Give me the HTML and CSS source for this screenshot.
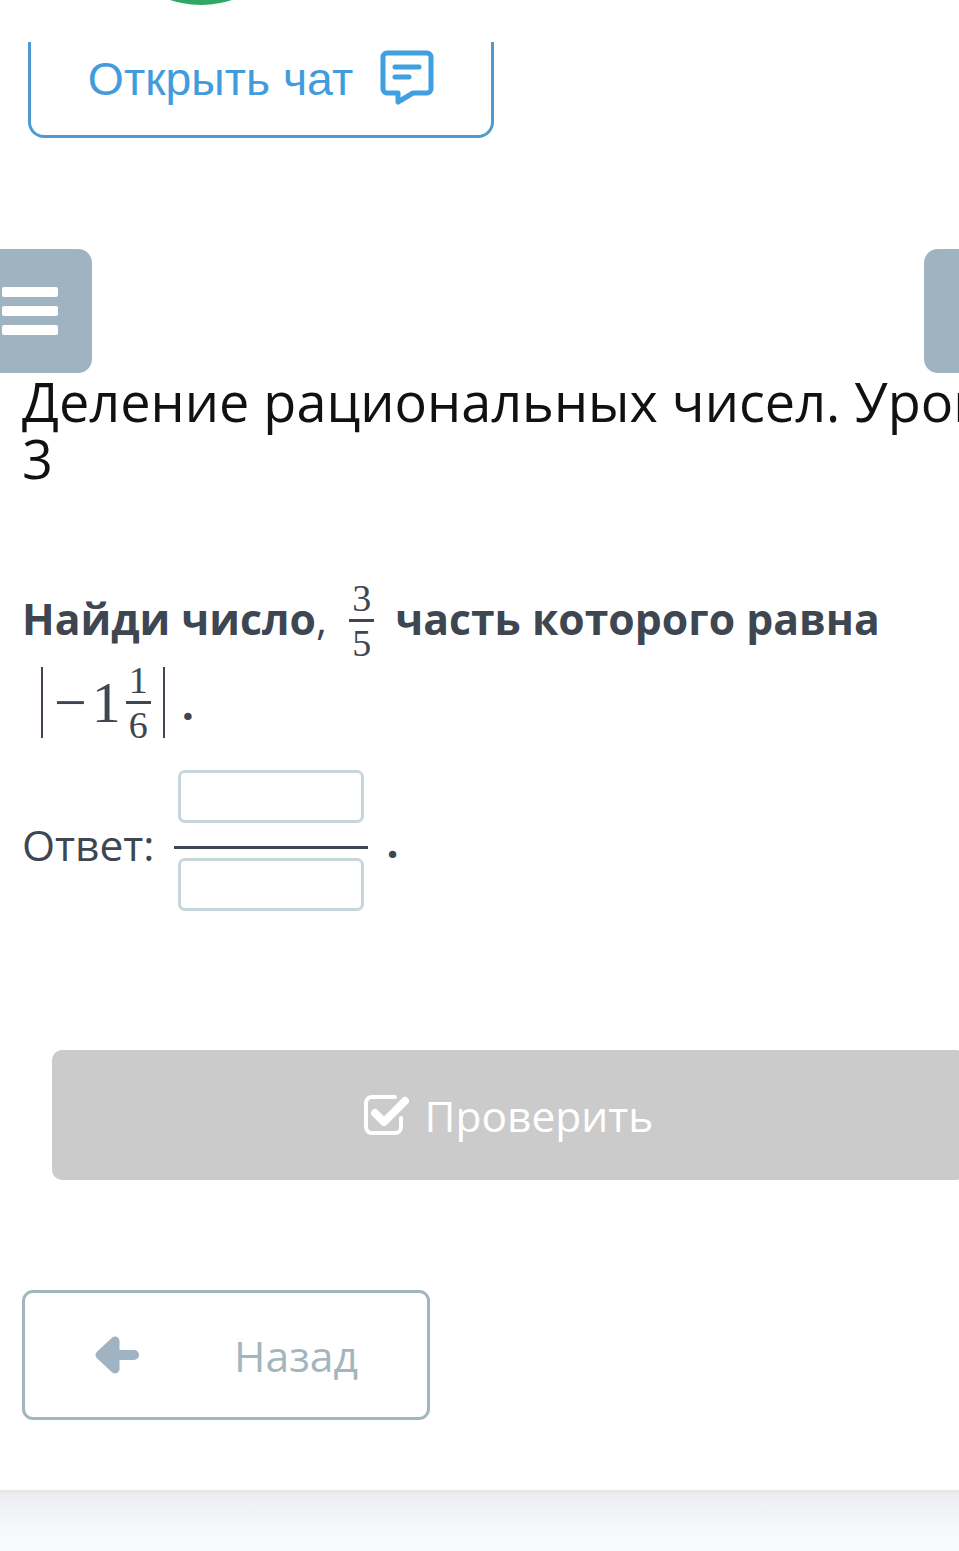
FILE: index.html
```html
<!DOCTYPE html>
<html lang="ru">
<head>
    <meta charset="UTF-8">
    <meta name="viewport" content="width=device-width, initial-scale=1.0">
    <title>Деление рациональных чисел</title>
    <link rel="stylesheet" href="styles.css">
</head>
<body>
    <div class="page">

        <!-- Chat block -->
        <div class="top-strip"><div class="avatar"></div></div>
        <button class="chat-button">
            <span>Открыть чат</span>
            <svg class="chat-icon" viewBox="0 0 54 55">
                <path d="M7 3H47A4 4 0 0 1 51 7V39A4 4 0 0 1 47 43H33L18 52V43H7A4 4 0 0 1 3 39V7A4 4 0 0 1 7 3Z" fill="#fff" stroke="#3f9fe0" stroke-width="5" stroke-linejoin="round"/>
                <path d="M15 17H39M15 27H29" fill="none" stroke="#3f9fe0" stroke-width="5" stroke-linecap="round"/>
            </svg>
        </button>

        <!-- Side menu buttons -->
        <div class="side-row">
            <div class="side-button side-left">
                <span class="bar"></span>
                <span class="bar"></span>
                <span class="bar"></span>
            </div>
            <div class="side-button side-right"></div>
        </div>

        <h1 class="lesson-title">Деление рациональных чисел. Уровень 3</h1>

        <!-- Task -->
        <div class="question">
            <b>Найди число</b>,
            <span class="frac frac-first"><span class="num">3</span><span class="den">5</span></span>
            <b>часть которого равна</b>
        </div>
        <div class="math-line">
            <span class="abs">
                <span class="minus">−</span><span class="whole">1</span>
                <span class="frac frac-small"><span class="num">1</span><span class="den">6</span></span>
            </span>
            <span class="dot">.</span>
        </div>

        <div class="answer">
            <span class="answer-label">Ответ:</span>
            <div class="answer-frac">
                <input type="text" class="answer-input">
                <div class="answer-line"></div>
                <input type="text" class="answer-input">
            </div>
            <span class="answer-dot">.</span>
        </div>

        <button class="check-button">
            <svg class="check-icon" viewBox="0 0 46 42">
                <path d="M38 24V33A6 6 0 0 1 32 39H9A6 6 0 0 1 3 33V9A6 6 0 0 1 9 3H32" fill="none" stroke="#fff" stroke-width="4" stroke-linecap="round"/>
                <path d="M12 19L21 28L42 7" fill="none" stroke="#fff" stroke-width="8" stroke-linecap="round" stroke-linejoin="round"/>
            </svg>
            <span>Проверить</span>
        </button>

        <button class="back-button">
            <svg class="back-icon" viewBox="0 0 44 38">
                <path d="M20 5L5 19L20 33Z" fill="#9fb3c2" stroke="#9fb3c2" stroke-width="9" stroke-linejoin="round"/>
                <path d="M10 19H39" fill="none" stroke="#9fb3c2" stroke-width="10" stroke-linecap="round"/>
            </svg>
            <span>Назад</span>
        </button>

    </div>
    <div class="footer"></div>
</body>
</html>
```

FILE: styles.css
```css
html, body {
    margin: 0;
    height: 1551px;
    overflow: hidden;
    background: #fff;
}
body {
    font-family: "Open Sans", sans-serif;
    color: #3d4651;
}
.page {
    width: 1018px;
    height: 1490px;
}
.top-strip {
    height: 42px;
    overflow: hidden;
}
.avatar {
    width: 196px;
    height: 196px;
    margin: -191px 0 0 103px;
    border-radius: 50%;
    background: #2fa866;
}
.chat-button {
    display: flex;
    align-items: center;
    justify-content: center;
    gap: 27px;
    width: 466px;
    height: 96px;
    margin-left: 28px;
    padding: 0 0 20px;
    box-sizing: border-box;
    background: #fff;
    border: 3px solid #4f9bd0;
    border-top: none;
    border-radius: 0 0 16px 16px;
    font-family: "Liberation Sans", Arial, sans-serif;
    font-size: 46.4px;
    color: #429cdc;
}
.chat-icon {
    width: 54px;
    height: 55px;
    margin-top: -2px;
}
.side-row {
    display: flex;
    justify-content: space-between;
    height: 124px;
    margin-top: 111px;
}
.side-button {
    width: 94px;
    background: #9fb3c0;
    border-radius: 14px;
}
.side-left {
    display: flex;
    flex-direction: column;
    justify-content: center;
    gap: 9.5px;
    margin-left: -2px;
    padding-left: 4px;
    box-sizing: border-box;
    border-radius: 0 14px 14px 0;
}
.bar {
    width: 56px;
    height: 9.5px;
    background: #fff;
    border-radius: 2px;
}
.lesson-title {
    width: 1075px;
    margin: 0;
    padding-left: 22px;
    font-size: 54px;
    font-weight: 400;
    line-height: 57px;
    color: #111;
}
.question {
    margin: 92px 0 0 22px;
    width: 930px;
    font-size: 42.7px;
    line-height: 76px;
}
.question b {
    font-weight: 700;
}
.frac {
    display: inline-flex;
    flex-direction: column;
    align-items: center;
    vertical-align: middle;
    font-family: "Liberation Serif", serif;
    font-weight: 400;
    line-height: 1;
}
.frac .num {
    padding: 0 3px 2px;
    border-bottom: 3px solid #3d4651;
}
.frac .den {
    padding-top: 2px;
}
.frac-first {
    margin: 0 10px 6px 11px;
    font-size: 38px;
}
.math-line {
    display: flex;
    align-items: center;
    height: 76px;
    margin: -4px 0 0 41px;
}
.abs {
    display: flex;
    align-items: center;
    height: 71px;
    padding-left: 11px;
    border-left: 2px solid #3d4651;
    border-right: 2px solid #3d4651;
    font-family: "Liberation Serif", serif;
    font-size: 58px;
}
.minus {
    margin-right: 5px;
}
.frac-small {
    margin: 0 12px 0 5px;
    font-size: 38px;
}
.dot {
    margin: 0 0 -2px 17px;
    font-size: 43px;
    font-weight: 700;
    line-height: 1;
}
.answer {
    display: flex;
    align-items: center;
    margin: 30px 0 0 22px;
    font-size: 42.5px;
}
.answer-label {
    margin-right: 19px;
    padding-top: 8px;
}
.answer-frac {
    display: flex;
    flex-direction: column;
    align-items: center;
    width: 194px;
}
.answer-input {
    width: 186px;
    height: 53px;
    padding: 0;
    box-sizing: border-box;
    border: 3px solid #c6d6da;
    border-radius: 7px;
    background: #fff;
}
.answer-line {
    width: 194px;
    height: 3px;
    margin: 23px 0 9px;
    background: #3d4651;
}
.answer-dot {
    margin-left: 19px;
    padding-top: 2px;
    font-weight: 700;
}
.check-button {
    display: flex;
    align-items: center;
    justify-content: center;
    gap: 16px;
    width: 914px;
    height: 130px;
    margin: 139px 0 0 52px;
    padding: 0 2px 0 0;
    border: none;
    border-radius: 10px;
    background: #cbcbcb;
    color: #fff;
    font-family: "Open Sans", sans-serif;
    font-size: 42.5px;
}
.check-icon {
    width: 46px;
    height: 42px;
}
.back-button {
    display: flex;
    align-items: center;
    width: 408px;
    height: 130px;
    margin: 110px 0 0 22px;
    padding: 0 0 0 70px;
    box-sizing: border-box;
    background: #fff;
    border: 3px solid #a3b5bd;
    border-radius: 11px;
    color: #a3b5bd;
    font-family: "Open Sans", sans-serif;
    font-size: 42.7px;
}
.back-icon {
    width: 44px;
    height: 38px;
    margin-right: 95px;
}
.footer {
    height: 61px;
    border-top: 3px solid #e6e7e6;
    box-sizing: border-box;
    background: linear-gradient(to bottom, #ecedf3, #f1f4f7 35%, #f6fafd 70%);
}
```
